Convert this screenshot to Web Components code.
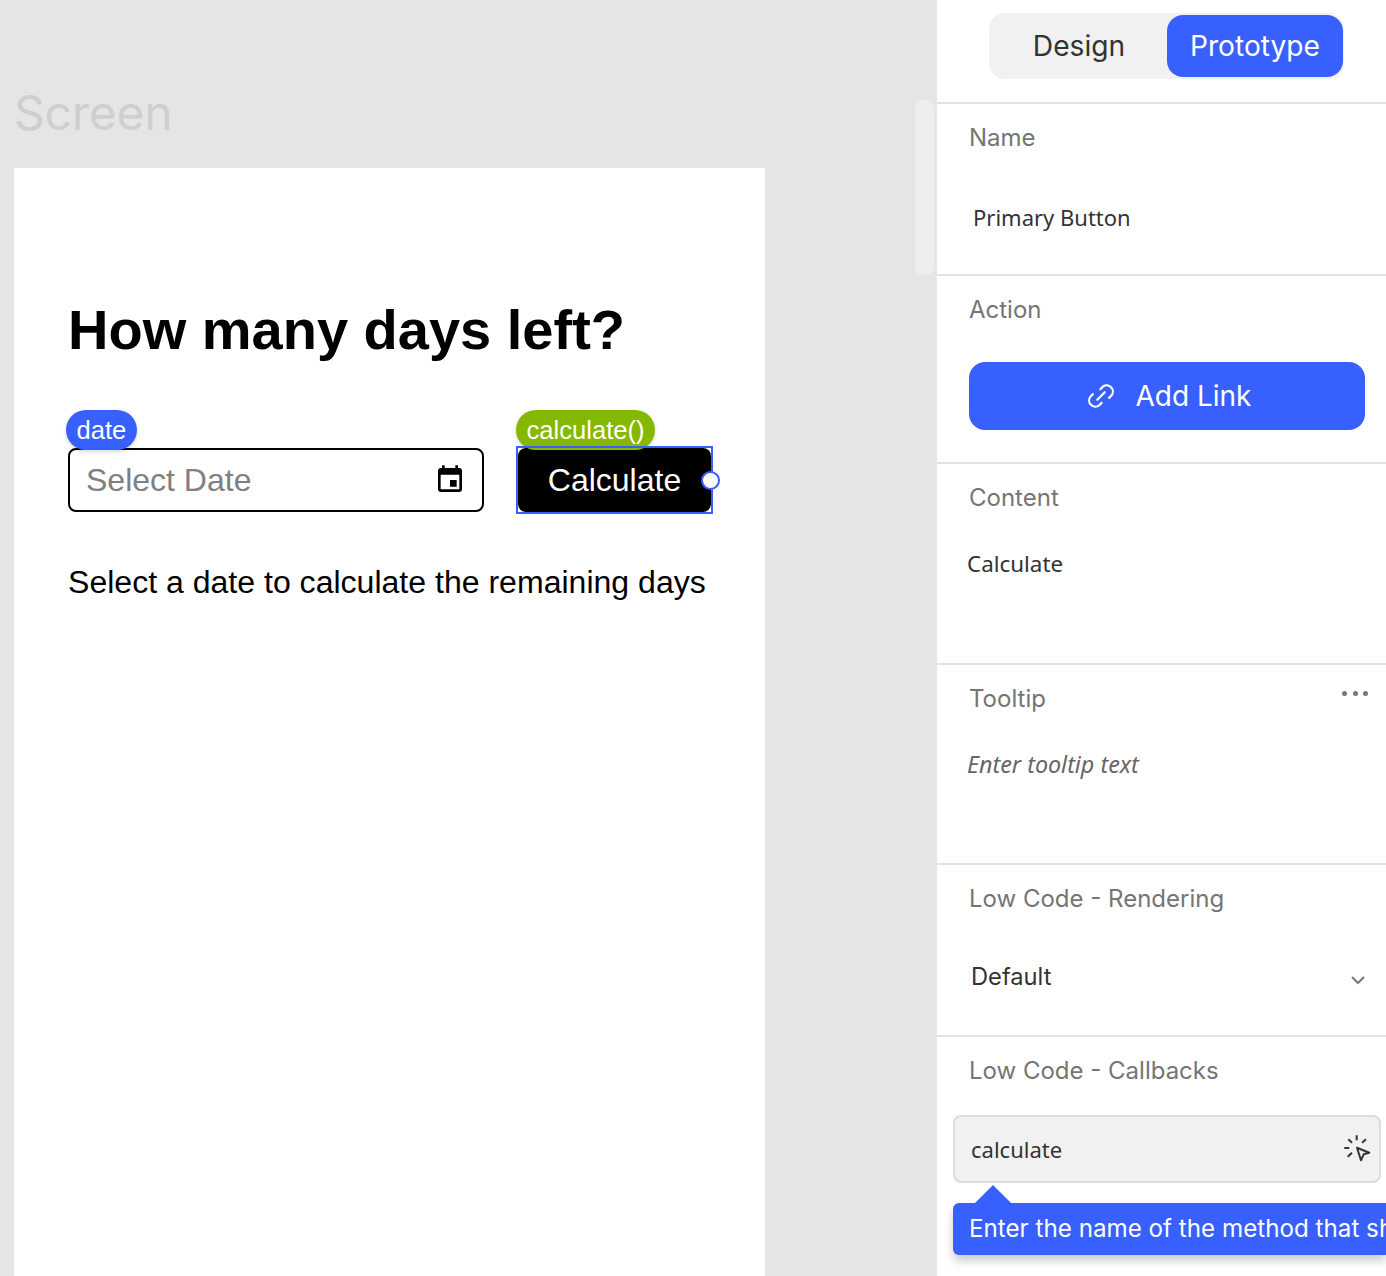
<!DOCTYPE html>
<html>
<head>
<meta charset="utf-8">
<title>Screen</title>
<style>
  html, body { margin: 0; height: 100%; overflow: hidden; }
  body { font-family: "Inter", sans-serif; }
</style>
</head>
<body>
<app-shell>
  <screen-canvas slot="canvas" title-text="Screen">
    <h1-title>How many days left?</h1-title>
    <form-row>
      <date-input tag="date" placeholder="Select Date"></date-input>
      <primary-button tag="calculate()">Calculate</primary-button>
    </form-row>
    <result-text>Select a date to calculate the remaining days</result-text>
  </screen-canvas>

  <prop-panel slot="panel">
    <panel-section label="Name" style="--h:172px;--gap:45px">
      <prop-value style="margin-left:4px;font-size:22px">Primary Button</prop-value>
    </panel-section>
    <panel-section label="Action" style="--h:188px;--gap:35px">
      <link-button>Add Link</link-button>
    </panel-section>
    <panel-section label="Content" style="--h:201px;--gap:32px">
      <prop-value style="margin-left:-2px;font-size:22.4px">Calculate</prop-value>
    </panel-section>
    <panel-section label="Tooltip" more style="--h:200px;--gap:31px">
      <prop-value style="margin-left:-2px;font-size:23.3px;font-style:italic;color:#666">Enter tooltip text</prop-value>
    </panel-section>
    <panel-section label="Low Code - Rendering" style="--h:172px;--gap:44px">
      <select-value>Default</select-value>
    </panel-section>
    <panel-section label="Low Code - Callbacks" last style="--h:239px;--gap:27px">
      <callback-field value="calculate">Enter the name of the method that should</callback-field>
    </panel-section>
  </prop-panel>
</app-shell>

<script>
function define(name, css, html) {
  customElements.define(name, class extends HTMLElement {
    constructor() {
      super();
      this.attachShadow({ mode: 'open' });
    }
    connectedCallback() {
      const a = n => this.getAttribute(n) || '';
      this.shadowRoot.innerHTML = `<style>${css}</style>${typeof html === 'function' ? html(a, this) : html}`;
    }
  });
}

define('app-shell', `
  :host { display: flex; width: 100%; height: 100vh; overflow: hidden; }
  .canvas { flex: 0 0 937px; min-width: 0; }
  .panel { flex: 1; min-width: 0; }
`, `<div class="canvas"><slot name="canvas"></slot></div><div class="panel"><slot name="panel"></slot></div>`);

define('screen-canvas', `
  :host { display: flex; flex-direction: column; height: 100vh; background: #e5e5e5; position: relative; overflow: hidden; }
  .title { font: 400 48px/60px "Inter", sans-serif; color: #cfcfcf; padding: 83px 0 0 14px; height: 85px; letter-spacing: -.25px; }
  .sheet { flex: 1; width: 751px; margin-left: 14px; box-sizing: border-box; background: #fff; padding: 130px 51px 0 54px; }
  .thumb { position: absolute; left: 915px; top: 100px; width: 19px; height: 175px; border-radius: 8px; background: #eeeeee; }
`, a => `<div class="title">${a('title-text')}</div><div class="sheet"><slot></slot></div><div class="thumb"></div>`);

define('h1-title', `
  :host { display: block; font: 700 56px/64px "Liberation Sans", Arial, sans-serif; color: #000; white-space: nowrap; }
`, `<slot></slot>`);

define('form-row', `
  :host { display: flex; gap: 34px; margin-top: 86px; }
`, `<slot></slot>`);

define('date-input', `
  :host { display: flex; position: relative; box-sizing: border-box; width: 416px; height: 64px; align-items: center; justify-content: space-between;
    border: 2px solid #000; border-radius: 8px; padding: 0 16px; font: 32px "Liberation Sans", Arial, sans-serif; color: #808080; }
  svg { width: 32px; height: 32px; display: block; }
  .tag { position: absolute; left: -4px; top: -40px; height: 40px; line-height: 40px; padding: 0 10.5px; border-radius: 20px; background: #3860ff; color: #fff;
    font-size: 25.6px; box-shadow: 0 2px 4px rgba(0,0,0,.15); }
`, a => `<span>${a('placeholder')}</span>
  <svg viewBox="0 0 24 24"><path fill="#000" d="M17 12h-5v5h5v-5zM16 1v2H8V1H6v2H5c-1.11 0-1.99.9-1.99 2L3 19c0 1.1.89 2 2 2h14c1.1 0 2-.9 2-2V5c0-1.1-.9-2-2-2h-1V1h-2zm3 18H5V8h14v11z"/></svg>
  <span class="tag">${a('tag')}</span>`);

define('primary-button', `
  :host { display: flex; position: relative; box-sizing: border-box; width: 193px; height: 64px; align-items: center; justify-content: center;
    background: #000; color: #fff; border-radius: 8px; font: 32px "Liberation Sans", Arial, sans-serif; }
  .tag { position: absolute; left: -2px; top: -38px; height: 40px; line-height: 40px; padding: 0 10.5px; border-radius: 20px; background: #85b800; color: #fff;
    font-size: 25.6px; white-space: nowrap; box-shadow: 0 2px 4px rgba(0,0,0,.15); }
  .sel { position: absolute; inset: -2px; border: 2px solid #3860ff; pointer-events: none; }
  .handle { position: absolute; left: 183px; top: 22.5px; width: 15px; height: 15px; border: 2px solid #3860ff; border-radius: 50%; background: #fff; }
`, a => `<slot></slot><span class="tag">${a('tag')}</span><span class="sel"></span><span class="handle"></span>`);

define('result-text', `
  :host { display: block; font: 32.05px/40px "Liberation Sans", Arial, sans-serif; color: #000; margin-top: 50px; white-space: nowrap; }
`, `<slot></slot>`);

define('prop-panel', `
  :host { display: block; height: 100vh; background: #fff; overflow: hidden; }
  .head { height: 104px; box-sizing: border-box; border-bottom: 2px solid #e2e2e2; padding: 13px 0 0 52px; }
  .tabs { display: flex; box-sizing: border-box; width: 355px; height: 66px; padding: 2px 1px 2px 0; background: #f1f1f1; border-radius: 16px; font: 28.16px/62px "Inter", sans-serif; text-align: center; }
  .tabs span { flex: 1; color: #333; padding-left: 2px; }
  .tabs .on { flex: 0 0 176px; padding-left: 0; background: #3860ff; color: #fff; border-radius: 16px; }
`, `<div class="head"><div class="tabs"><span>Design</span><span class="on">Prototype</span></div></div><slot></slot>`);

define('panel-section', `
  :host { display: block; position: relative; box-sizing: border-box; height: var(--h); padding: 17px 0 0 32px; border-bottom: 2px solid #e2e2e2; }
  :host([last]) { border-bottom: 0; }
  .label { font: 24px/34px "Inter", sans-serif; color: #757575; height: 34px; }
  .body { margin-top: var(--gap); }
  .more { position: absolute; right: 18px; top: 25.5px; display: flex; gap: 5.5px; }
  .more i { width: 5px; height: 5px; border-radius: 50%; background: #777; }
`, (a, el) => `<div class="label">${a('label')}</div><div class="body"><slot></slot></div>${el.hasAttribute('more') ? '<div class="more"><i></i><i></i><i></i></div>' : ''}`);

define('prop-value', `
  :host { display: block; font: 24px/34px "Noto Sans", sans-serif; color: #333; white-space: nowrap; }
`, `<slot></slot>`);

define('select-value', `
  :host { display: flex; align-items: center; justify-content: space-between; margin-left: 2px; padding-right: 21px; font: 23.7px/34px "Inter", sans-serif; color: #333; }
  svg { width: 14px; height: 10px; margin-top: 5px; }
`, `<slot></slot><svg viewBox="0 0 14 10"><path d="M1 2 7 8 13 2" fill="none" stroke="#777" stroke-width="2"/></svg>`);

define('link-button', `
  :host { display: flex; align-items: center; justify-content: center; gap: 19px; box-sizing: border-box; width: 396px; height: 68px; background: #3860ff; color: #fff;
    border-radius: 16px; font: 28px "Inter", sans-serif; padding-left: 4px; }
  svg { width: 30px; height: 30px; display: block; }
`, `<svg viewBox="0 0 24 24" fill="none" stroke="#fff" stroke-width="1.7" stroke-linecap="round"><path d="M11.5 6.5l2-2a5 5 0 0 1 7 7l-2 2"/><path d="M12.5 17.5l-2 2a5 5 0 0 1-7-7l2-2"/><path d="M9 15l6-6"/></svg><slot></slot>`);

define('callback-field', `
  :host { display: block; position: relative; width: 428px; margin-left: -16px; }
  .box { display: flex; align-items: center; justify-content: space-between; box-sizing: border-box; height: 68px; border: 2px solid #dcdcdc; border-radius: 8px; background: #f1f1f1;
    padding: 0 8px 0 16px; font: 22px "Noto Sans", sans-serif; color: #333; }
  svg { width: 28px; height: 30px; display: block; margin-top: -2px; }
  .tip { position: absolute; left: 0; top: 88px; width: 433px; height: 52px; box-sizing: border-box; padding-left: 16px; background: #3860ff; color: #fff; border-radius: 6px 0 0 6px;
    font: 24.2px/51px "Inter", sans-serif; white-space: nowrap; overflow: hidden; box-shadow: 0 6px 10px rgba(0,0,0,.2); }
  .arrow { position: absolute; left: 22px; top: 70px; width: 0; height: 0; border-left: 18px solid transparent; border-right: 18px solid transparent; border-bottom: 18px solid #3860ff; }
`, a => `<div class="box"><span>${a('value')}</span>
  <svg viewBox="0 0 28 30" fill="none" stroke="#333" stroke-width="2"><path d="M13.7 2.3v5M5.3 6.3 9 9.7M23 6.3 19 9.7M1.3 15h5M4.7 23.7l4.3-4"/><path stroke-linejoin="round" d="M14 14.7l12.3 5-5.6 1.6L18 27.3z"/></svg></div>
  <div class="arrow"></div><div class="tip"><slot></slot></div>`);
</script>
</body>
</html>
